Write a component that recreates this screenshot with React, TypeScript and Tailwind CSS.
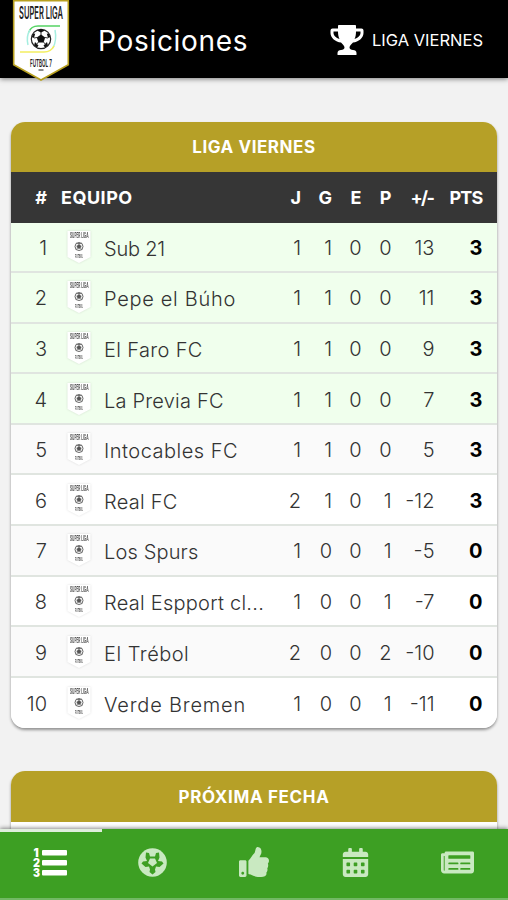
import { FaThumbsUp, FaCalendarAlt, FaNewspaper } from 'react-icons/fa';

interface Team {
  name: string;
  tracking: string;
  stats: number[];
  points: number;
}

const teams: Team[] = [
  { name: 'Sub 21', tracking: 'tracking-[-0.2px]', stats: [1, 1, 0, 0, 13], points: 3 },
  { name: 'Pepe el Búho', tracking: 'tracking-[0.7px]', stats: [1, 1, 0, 0, 11], points: 3 },
  { name: 'El Faro FC', tracking: 'tracking-[0.35px]', stats: [1, 1, 0, 0, 9], points: 3 },
  { name: 'La Previa FC', tracking: 'tracking-[0.2px]', stats: [1, 1, 0, 0, 7], points: 3 },
  { name: 'Intocables FC', tracking: 'tracking-[0.5px]', stats: [1, 1, 0, 0, 5], points: 3 },
  { name: 'Real FC', tracking: 'tracking-[0.25px]', stats: [2, 1, 0, 1, -12], points: 3 },
  { name: 'Los Spurs', tracking: 'tracking-[0.15px]', stats: [1, 0, 0, 1, -5], points: 0 },
  { name: 'Real Espport cl...', tracking: 'tracking-[0.25px]', stats: [1, 0, 0, 1, -7], points: 0 },
  { name: 'El Trébol', tracking: 'tracking-[0.5px]', stats: [2, 0, 0, 2, -10], points: 0 },
  { name: 'Verde Bremen', tracking: 'tracking-[0.8px]', stats: [1, 0, 0, 1, -11], points: 0 },
];

const columns = 'grid grid-cols-[36px_57px_168px_29px_31px_29.5px_30px_43px_48px] items-center';

const rowColor = (index: number) => {
  if (index < 4) return 'bg-[#f0ffed]';
  return index % 2 === 0 ? 'bg-[#fafafa]' : 'bg-white';
};

const Ball = () => (
  <g>
    <circle cx="28" cy="39" r="9.7" fill="#fff" stroke="#222" strokeWidth="1.2" />
    <path d="M28 34.5l4.2 3-1.6 4.9h-5.2l-1.6-4.9z" fill="#111" />
    <path d="M24 30.5l4 2 4-2-4-1.5zM18.8 37l2.2 1 1.2-4.5-2 .5zM37.2 37l-2.2 1-1.2-4.5 2 .5zM21 45.5l1-3.5 3.5 3.5-1.5 2zM35 45.5l-1-3.5-3.5 3.5 1.5 2z" fill="#111" />
    <path d="M28 32v3M21 38l3-.5M35 38l-3-.5M23 45l2.5-3M33 45l-2.5-3" stroke="#222" strokeWidth="0.9" />
  </g>
);

const HeaderBadge = () => (
  <svg width="56" height="80" viewBox="0 0 56 80" className="overflow-visible">
    <path d="M.7 .8h54.600v64L28 80 .7 64.800z" fill="#fff" stroke="#b8a020" strokeWidth="1.600" />
    <path d="M16 32q2-6 9-6h22" fill="none" stroke="#55d464" strokeWidth="1.500" />
    <path d="M17 30q-4 6-2 15M42 30q2 10-2 18" fill="none" stroke="#a5eee0" strokeWidth="1.500" />
    <path d="M7 52h24q7 0 10-6" fill="none" stroke="#f3ee60" strokeWidth="1.600" />
    <Ball />
    <text x="6" y="18.500" textLength="44" lengthAdjust="spacingAndGlyphs" fontSize="17" fontWeight="600" fill="#222">SUPER LIGA</text>
    <text x="17" y="67" textLength="22" lengthAdjust="spacingAndGlyphs" fontSize="11" fontWeight="600" fill="#222">FUTBOL 7</text>
    <path d="M25.500 70h5" stroke="#666" strokeWidth="1.500" />
  </svg>
);

const TeamBadge = () => (
  <svg width="24" height="32" viewBox="0 0 24 32" className="overflow-visible drop-shadow-[0_0_1px_rgba(0,0,0,0.13)]">
    <path d="M.5 0h23v26L12 32 .5 26z" fill="#fff" />
    <text x="3" y="6.500" textLength="18.500" lengthAdjust="spacingAndGlyphs" fontSize="7" fontWeight="700" fill="#555">SUPER LIGA</text>
    <circle cx="12" cy="15.500" r="4" fill="#fff" stroke="#666" strokeWidth="1" />
    <path d="M12 13.200l2.300 1.700-.9 2.600h-2.800l-.9-2.600zM9 12l3 1 3-1M8.500 18.500l2-1M15.500 18.500l-2-1" fill="#555" stroke="#777" strokeWidth=".5" />
    <text x="8" y="27" textLength="8" lengthAdjust="spacingAndGlyphs" fontSize="5" fontWeight="700" fill="#555">FUTBOL</text>
  </svg>
);

const TrophyIcon = () => (
  <svg width="34" height="31" viewBox="0 0 34 31" className="mt-[25px] shrink-0" fill="currentColor">
    <path
      fillRule="evenodd"
      d="M8 .5Q8 0 9 0h16q1 0 1 .5V3.500h5.500q2 0 2 2V8c0 5-5 9-10.500 9.500-1.500 2-3.500 3-3.500 5 0 1.500 1.500 2.500 3.500 2.500 2 0 3.500 1 3.500 3v1.500q0 .5-.5.5H8q-.5 0-.5-.5V28c0-2 1.500-3 3.500-3s3.500-1 3.500-2.500c0-2-2-3-3.500-5C5.500 17 .5 13 .5 8V5.500q0-2 2-2H8zM8 6.500H3.500V8c0 2.500 2.500 5 6 6C8.500 12 8 9.500 8 6.500zM26 6.500c0 3-.5 5.500-1.500 7.500 3.500-1 6-3.500 6-6V6.500z"
    />
  </svg>
);

const StandingsIcon = () => (
  <svg width="35" height="30" viewBox="0 0 35 30" className="overflow-visible" fill="currentColor">
    <rect x="9" y="3" width="25" height="5.500" rx="1" />
    <rect x="9" y="13" width="25" height="5.500" rx="1" />
    <rect x="9" y="23" width="25" height="5.500" rx="1" />
    <text x="0.500" y="9.500" fontSize="11.500" fontWeight="900">1</text>
    <text x="0" y="19.500" fontSize="11.500" fontWeight="900" textLength="7" lengthAdjust="spacingAndGlyphs">2</text>
    <text x="0" y="29.500" fontSize="11.500" fontWeight="900" textLength="7" lengthAdjust="spacingAndGlyphs">3</text>
  </svg>
);

const BallIcon = () => (
  <svg width="29" height="29" viewBox="0 0 29 29">
    <circle cx="14.500" cy="14.500" r="14.300" fill="currentColor" />
    <path
      d="M8 4.500l3 .5 1 3.500h5l1-3.500 3-.5.500 5-1.500 3.500 4 .5 1.500 2-4 3.500-3.500-.5-1 3 .5 2.500-3 2.500-3-2.500.5-2.500-1-3-3.500.5-4-3.500 1.500-2 4-.5L7.500 9.500z"
      fill="#3d9f23"
    />
    <path d="M12 10.500h5l2 4.500-4.500 3.500L10 15z" fill="currentColor" />
  </svg>
);

const navItems = [
  <StandingsIcon />,
  <BallIcon />,
  <FaThumbsUp size={30} />,
  <FaCalendarAlt size={29} />,
  <FaNewspaper size={33} />,
];

const TeamRow = ({ team, index }: { team: Team; index: number }) => (
  <div className={`${columns} ${rowColor(index)} h-[50.6px] border-b-2 border-[#e0e5e0] text-right text-[20px] font-light text-[#333] last:border-b-0`}>
    <span className="pt-[2px]">{index + 1}</span>
    <span className="flex justify-center pl-[6px]"><TeamBadge /></span>
    <span className={`${team.tracking} pt-[4px] whitespace-nowrap text-left`}>{team.name}</span>
    {team.stats.map((value, i) => (
      <span key={i} className="pt-[2px]">{value}</span>
    ))}
    <span className="pt-[2px] font-bold text-black">{team.points}</span>
  </div>
);

export default function App() {
  return (
    <div className="flex h-[900px] w-[508px] flex-col overflow-hidden bg-[#f2f2f2] font-['Inter',sans-serif]">
      <header className="z-10 flex h-[78px] shrink-0 items-start bg-black pl-[13px] text-white shadow-[0_1px_5px_rgba(0,0,0,0.5)]">
        <HeaderBadge />
        <h1 className="ml-[29px] w-[232px] pt-[20px] text-[28px] leading-[42px] tracking-[0.7px]">Posiciones</h1>
        <TrophyIcon />
        <span className="ml-[8px] whitespace-nowrap pt-[27px] text-[16.5px] leading-[26px]">LIGA VIERNES</span>
      </header>

      <main className="h-[751px] shrink-0 overflow-hidden px-[11px] pt-[44px]">
        <section className="w-[486px] overflow-hidden rounded-[14px] bg-white shadow-[0_2px_3px_rgba(0,0,0,0.4)]">
          <h2 className="h-[50px] bg-[#b6a027] text-center text-[17px] leading-[51px] font-bold tracking-[0.55px] text-white">LIGA VIERNES</h2>
          <div className={`${columns} h-[50.5px] bg-[#363636] text-right text-[18px] font-bold text-white`}>
            <span>#</span>
            <span className="col-span-2 pl-[14px] text-left tracking-[0.5px]">EQUIPO</span>
            <span>J</span>
            <span>G</span>
            <span>E</span>
            <span>P</span>
            <span className="pr-[1px] tracking-[-1.5px]">+/-</span>
            <span className="tracking-[-0.8px]">PTS</span>
          </div>
          {teams.map((team, i) => (
            <TeamRow key={team.name} team={team} index={i} />
          ))}
        </section>

        <section className="mt-[43px] w-[486px] overflow-hidden rounded-t-[14px] bg-white shadow-[0_2px_3px_rgba(0,0,0,0.4)]">
          <h2 className="h-[50.5px] bg-[#b6a027] text-center text-[17px] leading-[52px] font-bold tracking-[0.65px] text-white">PRÓXIMA FECHA</h2>
          <div className="h-[60px]" />
        </section>
      </main>

      <nav className="z-10 grid h-[71px] shrink-0 grid-cols-5 border-b-2 border-[#72b965] bg-[#3d9f23] text-white shadow-[0_-1px_4px_rgba(0,0,0,0.45)]">
        {navItems.map((icon, i) => (
          <button key={i} className={`flex items-center justify-center border-t-[3px] pb-[6px] ${i === 0 ? 'border-[#dfeedd]' : 'border-transparent text-[#c9e9c1]'}`}>
            {icon}
          </button>
        ))}
      </nav>
    </div>
  );
}
